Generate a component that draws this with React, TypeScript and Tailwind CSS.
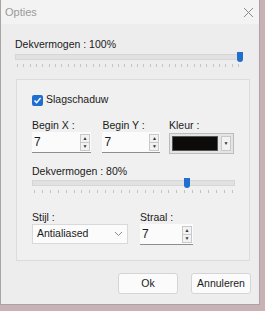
import * as React from "react"

const font = { fontFamily: '"Liberation Sans", Arial, sans-serif' }

const Ticks: React.FC<{ count: number }> = ({ count }) => (
  <div className="flex justify-between h-[3px] mt-[2px] px-[2px]">
    {Array.from({ length: count }).map((_, i) => (
      <div key={i} className="w-px h-[3px] bg-[#c4c4c4]" />
    ))}
  </div>
)

const Slider: React.FC<{ pct: number; ticks: number }> = ({ pct, ticks }) => (
  <div>
    <div className="relative h-[10px] flex items-center">
      <div className="w-full h-[6px] bg-[#e1e1e1] border border-[#d6d6d6]" />
      <div
        className="absolute top-0 w-[6px] h-[10px] bg-[#1f6fd1] rounded-b-[3px]"
        style={{ left: `calc(${pct}% - 4px)` }}
      />
    </div>
    <Ticks count={ticks} />
  </div>
)

const Spin: React.FC<{ value: string; width: string }> = ({ value, width }) => (
  <div className={`flex items-center h-[21px] bg-[#fbfbfb] border-b border-[#8d8d8d] ${width}`}>
    <span className="flex-1 pl-[2px] text-[12px] text-[#1a1a1a]">{value}</span>
    <div className="flex flex-col w-[10px] h-[17px] mr-[1px] border border-[#c9c9c9] bg-[#f2f2f2]">
      <div className="flex-1 flex items-center justify-center text-[5px] leading-none text-[#333]">▲</div>
      <div className="flex-1 flex items-center justify-center text-[5px] leading-none text-[#333] border-t border-[#c9c9c9]">▼</div>
    </div>
  </div>
)

const Label: React.FC<{ children: React.ReactNode }> = ({ children }) => (
  <div className="text-[10.5px] leading-[14px] text-[#1a1a1a]">{children}</div>
)

export default function App() {
  return (
    <div className="w-[265px] h-[311px] bg-[#c9b2b5] flex" style={font}>
      <div className="w-[260px] h-[305px] bg-[#eeeded] border-r border-b border-l border-[#a9a3a4] flex flex-col">
        <div className="h-[24px] bg-[#f4f3f3] flex items-center justify-between pl-[4px] pr-[5px]">
          <span className="text-[11px] text-[#9a9a9a]">Opties</span>
          <svg width="11" height="11" viewBox="0 0 11 11">
            <path d="M1 1 L10 10 M10 1 L1 10" stroke="#8a8a8a" strokeWidth="1" />
          </svg>
        </div>

        <div className="px-[14px] pt-[13px]">
          <div className="text-[10.5px] leading-[15px] text-[#1a1a1a]">Dekvermogen : 100%</div>
          <div className="pr-[4px]">
            <Slider pct={100} ticks={36} />
          </div>
        </div>

        <div className="mx-[15px] mt-[12px] h-[182px] w-[234px] border border-[#dcdcdc] bg-[#f1f0f0] px-[15px] pt-[13px]">
          <div className="flex items-center gap-[3px] h-[14px]">
            <div className="w-[11px] h-[11px] rounded-[2px] bg-[#1f6fd1] flex items-center justify-center">
              <svg width="9" height="9" viewBox="0 0 9 9">
                <path d="M1.5 4.5 L3.6 6.6 L7.6 2" stroke="white" strokeWidth="1.4" fill="none" />
              </svg>
            </div>
            <span className="text-[10.5px] text-[#1a1a1a]">Slagschaduw</span>
          </div>

          <div className="flex mt-[11px]">
            <div className="w-[71px]">
              <Label>Begin X :</Label>
              <Spin value="7" width="w-[59px]" />
            </div>
            <div className="w-[67px]">
              <Label>Begin Y :</Label>
              <Spin value="7" width="w-[58px]" />
            </div>
            <div>
              <Label>Kleur :</Label>
              <div className="mt-[1px] flex items-center h-[21px] w-[65px] bg-[#e4e4e4] border border-[#bcbcbc] px-[2px] gap-[3px]">
                <div className="w-[46px] h-[15px] bg-[#0d0a0a] border border-[#555]" />
                <div className="w-[10px] h-[15px] bg-[#f2f2f2] border border-[#c9c9c9] flex items-center justify-center text-[5px] text-[#333]">▼</div>
              </div>
            </div>
          </div>

          <div className="mt-[10px]">
            <Label>Dekvermogen : 80%</Label>
          </div>
          <div className="w-[203px]">
            <Slider pct={77} ticks={26} />
          </div>

          <div className="flex mt-[17px]">
            <div className="w-[108px]">
              <Label>Stijl :</Label>
              <div className="flex items-center justify-between h-[20px] w-[96px] bg-[#fbfbfb] border border-[#d9d9d9] px-[4px]">
                <span className="text-[10.5px] text-[#1a1a1a]">Antialiased</span>
                <svg width="9" height="6" viewBox="0 0 9 6">
                  <path d="M1 1 L4.5 4.5 L8 1" stroke="#8a8a8a" fill="none" />
                </svg>
              </div>
            </div>
            <div>
              <Label>Straal :</Label>
              <Spin value="7" width="w-[53px]" />
            </div>
          </div>
        </div>

        <div className="flex justify-end gap-[13px] pr-[8px] mt-[12px]">
          <button className="w-[60px] h-[21px] bg-[#fbfbfb] border border-[#d5d5d5] rounded-[3px] text-[10.5px] text-[#1a1a1a]">Ok</button>
          <button className="w-[60px] h-[21px] bg-[#fbfbfb] border border-[#d5d5d5] rounded-[3px] text-[10.5px] text-[#1a1a1a]">Annuleren</button>
        </div>
      </div>
    </div>
  )
}
